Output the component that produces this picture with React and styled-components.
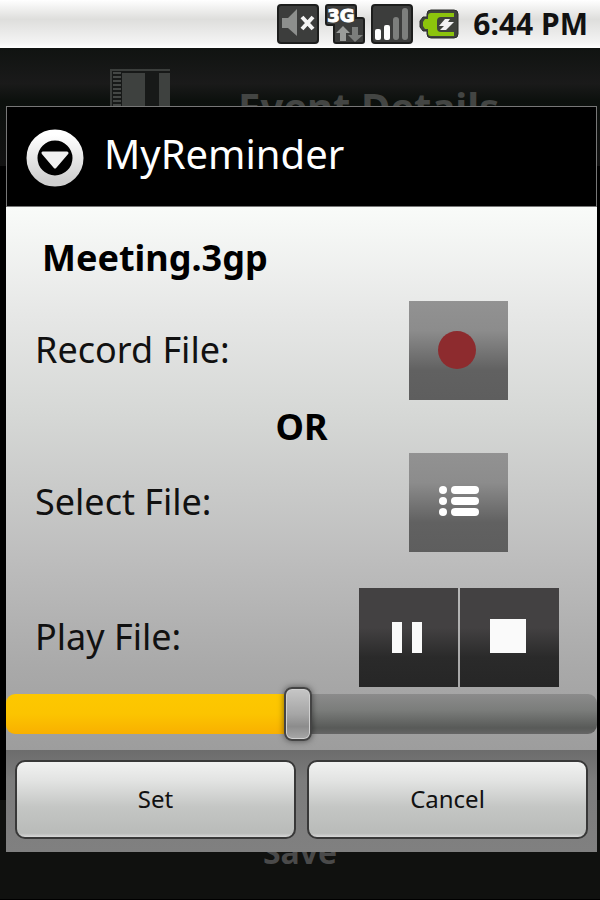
import React, { useState } from "react";
import styled, { createGlobalStyle } from "styled-components";

const GlobalStyle = createGlobalStyle`
  * {
    box-sizing: border-box;
  }
  body {
    margin: 0;
    background: #000;
    font-family: "Noto Sans", "Open Sans", sans-serif;
  }
  button {
    font-family: inherit;
    cursor: pointer;
  }
`;

const MutedIcon = () => (
  <svg width="42" height="40" viewBox="0 0 42 40" aria-hidden="true">
    <rect x="1" y="1" width="40" height="38" rx="3" fill="#3c3d3c" stroke="#1d1e1d" strokeWidth="2" />
    <path d="M5 14h6l9-9v27l-9-8H5z" fill="#8d8f8d" />
    <path d="M25 13l11 12M36 13L25 25" stroke="#f4f4f4" strokeWidth="4" />
  </svg>
);

const NetworkIcon = () => (
  <svg width="40" height="40" viewBox="0 0 40 40" aria-hidden="true">
    <path d="M3 1h26a2 2 0 0 1 2 2v11h6a2 2 0 0 1 2 2v21a2 2 0 0 1-2 2H11a2 2 0 0 1-2-2V21H3a2 2 0 0 1-2-2V3a2 2 0 0 1 2-2z" fill="#3c3d3c" stroke="#1d1e1d" strokeWidth="2" />
    <text x="16" y="18" textAnchor="middle" fontFamily="DejaVu Sans" fontWeight="bold" fontSize="18" fill="#fff" stroke="#fff">
      3G
    </text>
    <path d="M18 22l7 7h-4v8h-6v-8h-4z" fill="#9a9c9a" />
    <path d="M30 38l-7-7h4v-8h6v8h5z" fill="#7c7e7c" />
  </svg>
);

const SignalIcon = () => (
  <svg width="42" height="40" viewBox="0 0 42 40" aria-hidden="true">
    <rect x="1" y="1" width="40" height="38" rx="3" fill="#3c3d3c" stroke="#1d1e1d" strokeWidth="2" />
    <rect x="4" y="25" width="6" height="11" rx="2" fill="#fff" />
    <rect x="13" y="21" width="6" height="15" rx="2" fill="#fff" />
    <rect x="22" y="13" width="6" height="23" rx="3" fill="#7d7f7d" />
    <rect x="31" y="4" width="6" height="32" rx="3" fill="#7d7f7d" />
  </svg>
);

const BatteryIcon = () => (
  <svg width="40" height="30" viewBox="0 0 40 30" aria-hidden="true">
    <path d="M12 1h23a4 4 0 0 1 4 4v20a4 4 0 0 1-4 4H12a4 4 0 0 1-4-4v-3H4l-3-4v-6l3-4h4V5a4 4 0 0 1 4-4z" fill="#3f423c" stroke="#2b2d29" />
    <path d="M12 4h23v4H22a4 4 0 0 0-4 4v7a4 4 0 0 0 4 4h13v4H12a3 3 0 0 1-3-3v-4H6l-2-3v-4l2-3h3V7a3 3 0 0 1 3-3z" fill="#8cc40c" />
    <path d="M26 10h5l-2 3h6l-8 8h-6l4-4h-5z" fill="#f2f2f2" />
  </svg>
);

const NotebookIcon = () => (
  <svg width="60" height="76" viewBox="0 0 60 76" aria-hidden="true">
    <rect width="60" height="76" fill="#171918" />
    <path d="M1 76V1h59" fill="none" stroke="#3b3e3c" strokeWidth="2" />
    <path d="M7 3v73" stroke="#444745" strokeWidth="8" strokeDasharray="2 2" />
    <rect x="12" y="4" width="23" height="72" fill="#3e413f" />
    <rect x="49" y="4" width="11" height="72" fill="#3e413f" />
  </svg>
);

const DialogIcon = () => (
  <svg width="58" height="58" viewBox="0 0 58 58" aria-hidden="true">
    <defs>
      <linearGradient id="ring" x1="0" y1="0" x2="0" y2="1">
        <stop offset="0" stopColor="#fff" />
        <stop offset="1" stopColor="#cfcfcf" />
      </linearGradient>
    </defs>
    <circle cx="29" cy="29" r="23" fill="none" stroke="url(#ring)" strokeWidth="11" />
    <path d="M17 24h24L29 38z" fill="#f0f0f0" stroke="#f0f0f0" strokeWidth="3" strokeLinejoin="round" />
  </svg>
);

const RecordIcon = () => (
  <svg width="99" height="99" viewBox="0 0 99 99" aria-hidden="true">
    <circle cx="48" cy="49" r="19" fill="#8d2b2e" />
  </svg>
);

const ListIcon = () => (
  <svg width="99" height="99" viewBox="0 0 99 99" aria-hidden="true">
    {[37, 48, 59].map((y) => (
      <g key={y} fill="#fff">
        <circle cx="34" cy={y} r="4" />
        <rect x="42" y={y - 4} width="28" height="8" rx="4" />
      </g>
    ))}
  </svg>
);

const PauseIcon = () => (
  <svg width="99" height="99" viewBox="0 0 99 99" aria-hidden="true">
    <rect x="33" y="34" width="10" height="31" fill="#fafafa" />
    <rect x="53" y="34" width="10" height="31" fill="#fafafa" />
  </svg>
);

const StopIcon = () => (
  <svg width="99" height="99" viewBox="0 0 99 99" aria-hidden="true">
    <rect x="30" y="31" width="36" height="34" fill="#fafafa" />
  </svg>
);

const DURATION = 150;

const App = () => {
  const [position, setPosition] = useState(74);

  return (
    <Phone>
      <GlobalStyle />
      <StatusBar>
        <MutedIcon />
        <NetworkIcon />
        <SignalIcon />
        <BatteryIcon />
        <Clock>6:44 PM</Clock>
      </StatusBar>
      <Screen>
        <ScreenHeader>
          <NotebookIcon />
          <ScreenTitle>Event Details</ScreenTitle>
        </ScreenHeader>
        <ScreenFooter>
          <SaveButton type="button">Save</SaveButton>
        </ScreenFooter>
        <Overlay>
          <Dialog role="dialog" aria-labelledby="dialog-title">
            <TitleBar>
              <DialogIcon />
              <DialogTitle id="dialog-title">MyReminder</DialogTitle>
            </TitleBar>
            <Content>
              <FileName>Meeting.3gp</FileName>
              <Row>
                <Label htmlFor="record">Record File:</Label>
                <MediaButton id="record" type="button" $faded>
                  <RecordIcon />
                </MediaButton>
              </Row>
              <Separator>OR</Separator>
              <Row>
                <Label htmlFor="select">Select File:</Label>
                <MediaButton id="select" type="button" $faded>
                  <ListIcon />
                </MediaButton>
              </Row>
              <Row $wide>
                <Label htmlFor="pause">Play File:</Label>
                <Player>
                  <MediaButton id="pause" type="button">
                    <PauseIcon />
                  </MediaButton>
                  <MediaButton type="button" aria-label="Stop">
                    <StopIcon />
                  </MediaButton>
                </Player>
              </Row>
              <SeekBar
                type="range"
                min="0"
                max={DURATION}
                aria-label="Position"
                value={position}
                onChange={(e) => setPosition(Number(e.target.value))}
                style={{ "--progress": `${(position / DURATION) * 100}%` }}
              />
            </Content>
            <Actions>
              <ActionButton type="button">Set</ActionButton>
              <ActionButton type="button">Cancel</ActionButton>
            </Actions>
          </Dialog>
        </Overlay>
      </Screen>
    </Phone>
  );
};

const Phone = styled.div`
  display: flex;
  flex-direction: column;
  min-height: 100vh;
`;

const StatusBar = styled.header`
  display: flex;
  align-items: center;
  justify-content: flex-end;
  gap: 6px;
  height: 48px;
  padding-right: 12px;
  background: linear-gradient(#fff, #dededc 40%, #f4f4f4 90%, #fff);
`;

const Clock = styled.time`
  margin-left: 8px;
  font-size: 30px;
  font-weight: 700;
  line-height: 40px;
  color: #111;
`;

const Screen = styled.main`
  position: relative;
  display: flex;
  flex: 1;
  flex-direction: column;
  justify-content: space-between;
  border-bottom: 1px solid #000;
`;

const ScreenHeader = styled.div`
  display: flex;
  align-items: center;
  gap: 68px;
  height: 118px;
  padding: 0 20px 0 110px;
  background: linear-gradient(#101311, #1a1a1a 30%, #0c100d 45%, #121212);
`;

const ScreenTitle = styled.h1`
  margin: 0;
  font-size: 40px;
  line-height: 48px;
  color: #434543;
`;

const ScreenFooter = styled.div`
  display: flex;
  align-items: center;
  justify-content: center;
  height: 99px;
  padding-top: 4px;
  background: #10110f;
`;

const SaveButton = styled.button`
  border: 0;
  background: none;
  font-size: 32px;
  font-weight: 700;
  line-height: 48px;
  color: #4a4a4a;
`;

/* holds the dialog over the dimmed screen */
const Overlay = styled.div`
  position: absolute;
  inset: 0;
  display: flex;
  align-items: center;
  padding: 58px 3px 48px 6px;
`;

const Dialog = styled.section`
  flex: 1;
`;

const TitleBar = styled.div`
  display: flex;
  align-items: flex-start;
  gap: 20px;
  height: 101px;
  padding: 22px 19px 0;
  border: 1px solid #777;
  background: #000;
`;

const DialogTitle = styled.h2`
  margin: 0;
  font-size: 40px;
  font-weight: 400;
  line-height: 50px;
  color: #fff;
`;

const Content = styled.div`
  padding-bottom: 9px;
  background: linear-gradient(#f9fbf9, #e6e7e6 20%, #d6d8d6 38%, #bdbdbd 65%, #a9a9a9 85%, #9d9d9d);
`;

const FileName = styled.p`
  margin: 0;
  padding: 24px 36px 16px;
  font-size: 36px;
  font-weight: 700;
  line-height: 54px;
  color: #000;
`;

const Row = styled.div`
  display: flex;
  align-items: center;
  justify-content: space-between;
  margin-top: ${({ $wide }) => ($wide ? "36px" : "0")};
  padding: 0 ${({ $wide }) => ($wide ? "38px" : "89px")} 0 29px;
`;

const Label = styled.label`
  font-size: 36px;
  line-height: 54px;
  color: #111;
`;

const Separator = styled.p`
  margin: 0;
  font-size: 36px;
  font-weight: 700;
  line-height: 53px;
  text-align: center;
  color: #000;
`;

const Player = styled.div`
  display: flex;
  gap: 2px;
`;

const MediaButton = styled.button`
  display: block;
  width: 99px;
  height: 99px;
  padding: 0;
  border: 0;
  background: ${({ $faded }) =>
    $faded
      ? "linear-gradient(#929292, #8c8c8c 30%, #616161 70%, #5e5e5e)"
      : "linear-gradient(#434142, #434142 40%, #2a2a2a 70%, #262626)"};
  svg {
    display: block;
  }
`;

const SeekBar = styled.input`
  display: block;
  width: 100%;
  height: 54px;
  margin: 0;
  appearance: none;
  background: none;
  &::-webkit-slider-runnable-track {
    height: 40px;
    border-radius: 9px;
    background:
      linear-gradient(#fdc800, #fcc400 50%, #f9b000) 0 0 / var(--progress) 100% no-repeat,
      linear-gradient(#8b8b8b, #7b7d7b 40%, #585a58 85%, #666);
  }
  &::-webkit-slider-thumb {
    appearance: none;
    width: 28px;
    height: 54px;
    margin-top: -7px;
    border: 2px solid #444;
    border-radius: 8px;
    background: linear-gradient(#c6c6c6, #a6a6a6 50%, #8c8c8c 75%, #a8a8a8);
    box-shadow: inset 0 0 0 1px #d0d0d0, 0 0 6px rgba(0, 0, 0, 0.5);
  }
`;

const Actions = styled.div`
  display: flex;
  gap: 11px;
  height: 102px;
  padding: 10px 9px 13px;
  background: linear-gradient(#6c6c6c, #7c7c7c 30%, #808080);
`;

const ActionButton = styled.button`
  flex: 1;
  border: 2px solid #383838;
  border-radius: 10px;
  background: linear-gradient(#f1f2f1, #e2e3e2 25%, #c4c6c4 60%, #b9bbb9 95%, #d8d8d8);
  font-size: 24px;
  line-height: 36px;
  color: #111;
`;

export default App;
